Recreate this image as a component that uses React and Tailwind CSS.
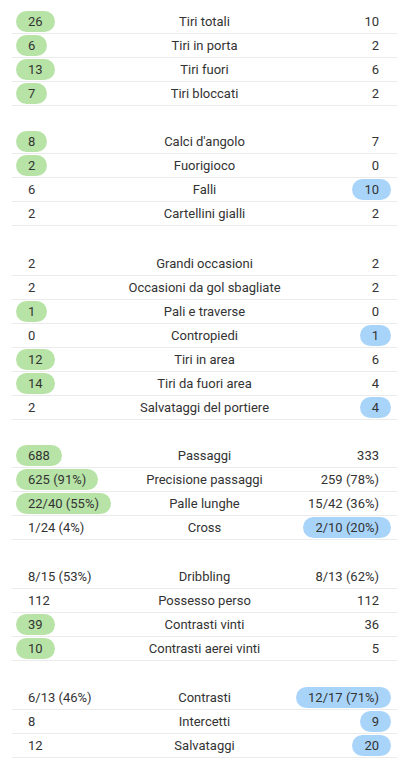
const sections = [
  {
    gap: "",
    rows: [
      ["26", "Tiri totali", "10", "home"],
      ["6", "Tiri in porta", "2", "home"],
      ["13", "Tiri fuori", "6", "home"],
      ["7", "Tiri bloccati", "2", "home"],
    ],
  },
  {
    gap: "mt-6",
    rows: [
      ["8", "Calci d'angolo", "7", "home"],
      ["2", "Fuorigioco", "0", "home"],
      ["6", "Falli", "10", "away"],
      ["2", "Cartellini gialli", "2", null],
    ],
  },
  {
    gap: "mt-[26px]",
    rows: [
      ["2", "Grandi occasioni", "2", null],
      ["2", "Occasioni da gol sbagliate", "2", null],
      ["1", "Pali e traverse", "0", "home"],
      ["0", "Contropiedi", "1", "away"],
      ["12", "Tiri in area", "6", "home"],
      ["14", "Tiri da fuori area", "4", "home"],
      ["2", "Salvataggi del portiere", "4", "away"],
    ],
  },
  {
    gap: "mt-6",
    rows: [
      ["688", "Passaggi", "333", "home"],
      ["625 (91%)", "Precisione passaggi", "259 (78%)", "home"],
      ["22/40 (55%)", "Palle lunghe", "15/42 (36%)", "home"],
      ["1/24 (4%)", "Cross", "2/10 (20%)", "away"],
    ],
  },
  {
    gap: "mt-[25px]",
    rows: [
      ["8/15 (53%)", "Dribbling", "8/13 (62%)", null],
      ["112", "Possesso perso", "112", null],
      ["39", "Contrasti vinti", "36", "home"],
      ["10", "Contrasti aerei vinti", "5", "home"],
    ],
  },
  {
    gap: "mt-[25px]",
    rows: [
      ["6/13 (46%)", "Contrasti", "12/17 (71%)", "away"],
      ["8", "Intercetti", "9", "away"],
      ["12", "Salvataggi", "20", "away"],
    ],
  },
];

function Value({ value, highlight, side }) {
  const tone = highlight
    ? side === "home"
      ? "bg-[#b7e3a7]"
      : "bg-[#a9d4fa]"
    : "";
  return (
    <span
      className={`inline-flex h-[21px] items-center rounded-full px-3 ${tone} ${
        side === "home" ? "ml-1" : "mr-1.5"
      }`}
    >
      {value}
    </span>
  );
}

function StatRow({ row }) {
  const [home, label, away, winner] = row;
  return (
    <div className="grid h-6 grid-cols-[1fr_auto_1fr] items-center border-b border-[#ebebeb]">
      <div className="flex justify-start">
        <Value value={home} highlight={winner === "home"} side="home" />
      </div>
      <div className="text-center">{label}</div>
      <div className="flex justify-end">
        <Value value={away} highlight={winner === "away"} side="away" />
      </div>
    </div>
  );
}

export default function App() {
  return (
    <div
      className="min-h-[758px] bg-white pt-[10px] pl-3 pr-[10px] text-[13px] text-[#333333]"
      style={{ fontFamily: "Roboto, 'Liberation Sans', sans-serif" }}
    >
      {sections.map((section, i) => (
        <div key={i} className={section.gap}>
          {section.rows.map((row) => (
            <StatRow key={row[1]} row={row} />
          ))}
        </div>
      ))}
    </div>
  );
}
